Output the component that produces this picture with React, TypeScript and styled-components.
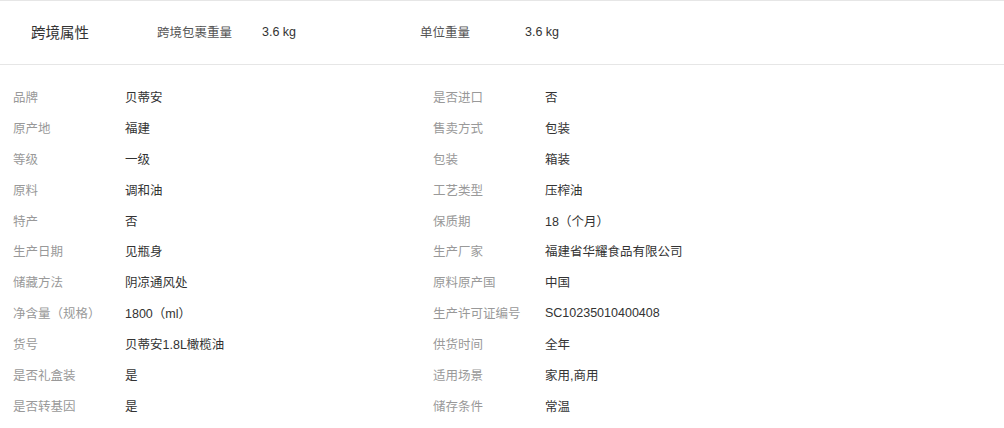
import styled, { createGlobalStyle } from 'styled-components';

const GlobalStyle = createGlobalStyle`
  html, body {
    margin: 0;
    padding: 0;
    background: #fff;
  }
  body {
    font-family: "Liberation Sans", Arial, "Noto Sans CJK SC", sans-serif;
    color: #333;
  }
`;

interface Attr {
  label: string;
  value: string;
}

const crossBorder: Attr[] = [
  { label: '跨境包裹重量', value: '3.6 kg' },
  { label: '单位重量', value: '3.6 kg' },
];

const attrs: Attr[] = [
  { label: '品牌', value: '贝蒂安' },
  { label: '是否进口', value: '否' },
  { label: '原产地', value: '福建' },
  { label: '售卖方式', value: '包装' },
  { label: '等级', value: '一级' },
  { label: '包装', value: '箱装' },
  { label: '原料', value: '调和油' },
  { label: '工艺类型', value: '压榨油' },
  { label: '特产', value: '否' },
  { label: '保质期', value: '18（个月）' },
  { label: '生产日期', value: '见瓶身' },
  { label: '生产厂家', value: '福建省华耀食品有限公司' },
  { label: '储藏方法', value: '阴凉通风处' },
  { label: '原料原产国', value: '中国' },
  { label: '净含量（规格）', value: '1800（ml）' },
  { label: '生产许可证编号', value: 'SC10235010400408' },
  { label: '货号', value: '贝蒂安1.8L橄榄油' },
  { label: '供货时间', value: '全年' },
  { label: '是否礼盒装', value: '是' },
  { label: '适用场景', value: '家用,商用' },
  { label: '是否转基因', value: '是' },
  { label: '储存条件', value: '常温' },
];

const Page = styled.div`
  width: 1004px;
  height: 428px;
  overflow: hidden;
  background: #fff;
`;

const CrossBar = styled.div`
  display: flex;
  align-items: center;
  height: 63px;
  border-top: 1px solid #e6e6e6;
  border-bottom: 1px solid #e6e6e6;
`;

const CrossTitle = styled.div`
  width: 126px;
  padding-left: 31px;
  font-size: 14.5px;
  color: #333;
  margin-top: -3px;
`;

const CrossPair = styled.div`
  display: flex;
  align-items: center;
  width: 263px;
  font-size: 12.5px;
  margin-top: -3px;
`;

const CrossLabel = styled.span`
  width: 105px;
  color: #555;
`;

const CrossValue = styled.span`
  color: #333;
  padding-top: 2px;
`;

const Grid = styled.div`
  display: grid;
  grid-template-columns: 420px 420px;
  grid-auto-rows: 30.9px;
  padding: 16px 0 0 13px;
`;

const Item = styled.div`
  display: flex;
  align-items: center;
  font-size: 12.5px;
  white-space: nowrap;
`;

const Label = styled.span`
  width: 112px;
  flex-shrink: 0;
  color: #999;
`;

const Value = styled.span`
  color: #333;
`;

export default function App() {
  return (
    <Page>
      <GlobalStyle />
      <CrossBar>
        <CrossTitle>跨境属性</CrossTitle>
        {crossBorder.map((a) => (
          <CrossPair key={a.label}>
            <CrossLabel>{a.label}</CrossLabel>
            <CrossValue>{a.value}</CrossValue>
          </CrossPair>
        ))}
      </CrossBar>
      <Grid>
        {attrs.map((a) => (
          <Item key={a.label}>
            <Label>{a.label}</Label>
            <Value>{a.value}</Value>
          </Item>
        ))}
      </Grid>
    </Page>
  );
}
